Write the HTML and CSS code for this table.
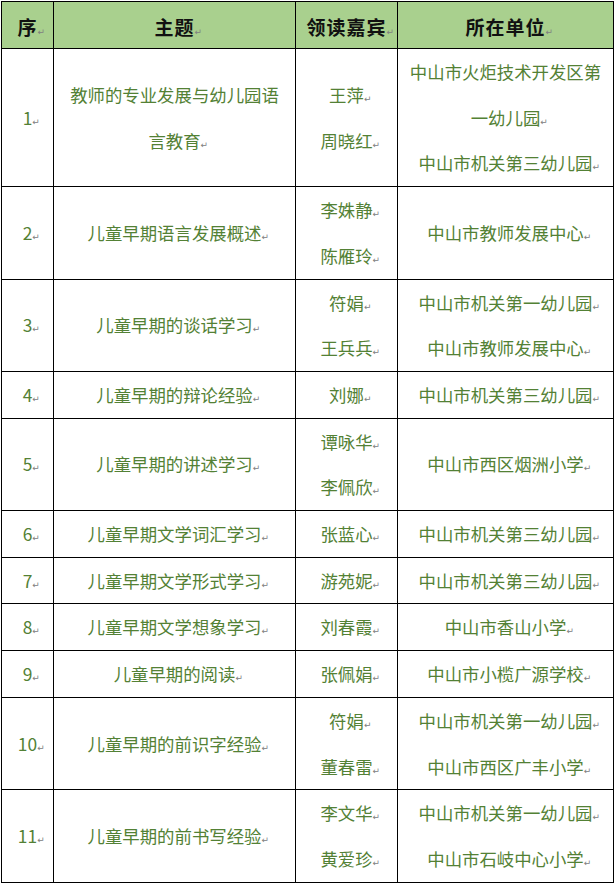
FILE: index.html
```html
<!DOCTYPE html>
<html lang="zh-CN">
<head>
<meta charset="utf-8">
<title>领读嘉宾</title>
<link rel="stylesheet" href="styles.css">
</head>
<body>
<table class="sched">
  <colgroup>
    <col class="c-no"><col class="c-topic"><col class="c-guest"><col class="c-unit">
  </colgroup>
  <thead>
    <tr>
      <th><p>序<span class="pm">↵</span></p></th>
      <th><p>主题<span class="pm">↵</span></p></th>
      <th><p>领读嘉宾<span class="pm">↵</span></p></th>
      <th><p>所在单位<span class="pm">↵</span></p></th>
    </tr>
  </thead>
  <tbody>
    <tr>
      <td><p>1<span class="pm">↵</span></p></td>
      <td><p>教师的专业发展与幼儿园语<br>言教育<span class="pm">↵</span></p></td>
      <td><p>王萍<span class="pm">↵</span></p><p>周晓红<span class="pm">↵</span></p></td>
      <td><p>中山市火炬技术开发区第<br>一幼儿园<span class="pm">↵</span></p><p>中山市机关第三幼儿园<span class="pm">↵</span></p></td>
    </tr>
    <tr>
      <td><p>2<span class="pm">↵</span></p></td>
      <td><p>儿童早期语言发展概述<span class="pm">↵</span></p></td>
      <td><p>李姝静<span class="pm">↵</span></p><p>陈雁玲<span class="pm">↵</span></p></td>
      <td><p>中山市教师发展中心<span class="pm">↵</span></p></td>
    </tr>
    <tr>
      <td><p>3<span class="pm">↵</span></p></td>
      <td><p>儿童早期的谈话学习<span class="pm">↵</span></p></td>
      <td><p>符娟<span class="pm">↵</span></p><p>王兵兵<span class="pm">↵</span></p></td>
      <td><p>中山市机关第一幼儿园<span class="pm">↵</span></p><p>中山市教师发展中心<span class="pm">↵</span></p></td>
    </tr>
    <tr>
      <td><p>4<span class="pm">↵</span></p></td>
      <td><p>儿童早期的辩论经验<span class="pm">↵</span></p></td>
      <td><p>刘娜<span class="pm">↵</span></p></td>
      <td><p>中山市机关第三幼儿园<span class="pm">↵</span></p></td>
    </tr>
    <tr>
      <td><p>5<span class="pm">↵</span></p></td>
      <td><p>儿童早期的讲述学习<span class="pm">↵</span></p></td>
      <td><p>谭咏华<span class="pm">↵</span></p><p>李佩欣<span class="pm">↵</span></p></td>
      <td><p>中山市西区烟洲小学<span class="pm">↵</span></p></td>
    </tr>
    <tr>
      <td><p>6<span class="pm">↵</span></p></td>
      <td><p>儿童早期文学词汇学习<span class="pm">↵</span></p></td>
      <td><p>张蓝心<span class="pm">↵</span></p></td>
      <td><p>中山市机关第三幼儿园<span class="pm">↵</span></p></td>
    </tr>
    <tr>
      <td><p>7<span class="pm">↵</span></p></td>
      <td><p>儿童早期文学形式学习<span class="pm">↵</span></p></td>
      <td><p>游苑妮<span class="pm">↵</span></p></td>
      <td><p>中山市机关第三幼儿园<span class="pm">↵</span></p></td>
    </tr>
    <tr>
      <td><p>8<span class="pm">↵</span></p></td>
      <td><p>儿童早期文学想象学习<span class="pm">↵</span></p></td>
      <td><p>刘春霞<span class="pm">↵</span></p></td>
      <td><p>中山市香山小学<span class="pm">↵</span></p></td>
    </tr>
    <tr>
      <td><p>9<span class="pm">↵</span></p></td>
      <td><p>儿童早期的阅读<span class="pm">↵</span></p></td>
      <td><p>张佩娟<span class="pm">↵</span></p></td>
      <td><p>中山市小榄广源学校<span class="pm">↵</span></p></td>
    </tr>
    <tr>
      <td><p>10<span class="pm">↵</span></p></td>
      <td><p>儿童早期的前识字经验<span class="pm">↵</span></p></td>
      <td><p>符娟<span class="pm">↵</span></p><p>董春雷<span class="pm">↵</span></p></td>
      <td><p>中山市机关第一幼儿园<span class="pm">↵</span></p><p>中山市西区广丰小学<span class="pm">↵</span></p></td>
    </tr>
    <tr>
      <td><p>11<span class="pm">↵</span></p></td>
      <td><p>儿童早期的前书写经验<span class="pm">↵</span></p></td>
      <td><p>李文华<span class="pm">↵</span></p><p>黄爱珍<span class="pm">↵</span></p></td>
      <td><p>中山市机关第一幼儿园<span class="pm">↵</span></p><p>中山市石岐中心小学<span class="pm">↵</span></p></td>
    </tr>
  </tbody>
</table>
</body>
</html>
```

FILE: styles.css
```css
html, body {
  margin: 0;
  padding: 0;
  background: #ffffff;
}

body {
  font-family: "Noto Sans CJK SC", "Noto Sans", sans-serif;
}

.sched {
  margin: 1px 0 0 1px;
  width: 612px;
  table-layout: fixed;
  border-collapse: collapse;
}

.c-no { width: 52px; }
.c-topic { width: 242px; }
.c-guest { width: 102px; }
.c-unit { width: 216px; }

.sched th,
.sched td {
  border: 1px solid #000000;
  padding: 0 4px;
  text-align: center;
  vertical-align: middle;
}

.sched p {
  margin: 0;
  white-space: nowrap;
  overflow: hidden;
}

.sched th {
  background: #a9d08e;
  color: #111111;
  font-weight: 700;
  font-size: 19px;
  letter-spacing: 1px;
}

.sched th p {
  height: 46px;
  line-height: 50px;
}

.sched td {
  color: #538135;
  font-size: 17.4px;
}

.sched td p {
  line-height: 45.7px;
  height: auto;
}

.pm {
  display: inline-block;
  width: 0;
  line-height: 0;
  font-family: "DejaVu Sans", sans-serif;
  font-size: 9px;
  font-weight: 400;
  letter-spacing: 0;
  color: #808080;
  vertical-align: baseline;
  white-space: nowrap;
}
```
